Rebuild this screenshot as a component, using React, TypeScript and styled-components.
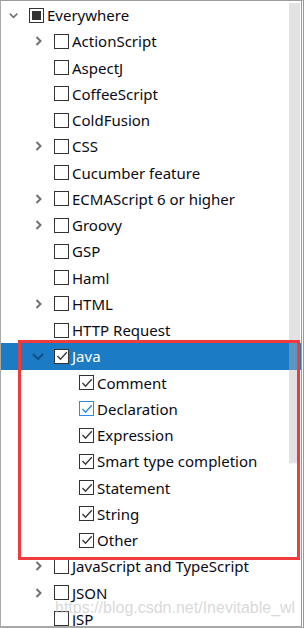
import React from "react";
import styled, { createGlobalStyle, css } from "styled-components";

type CheckState = "none" | "checked" | "partial";

interface Node {
  label: string;
  level: number;
  expander?: "down" | "right";
  check: CheckState;
  selected?: boolean;
  focused?: boolean;
}

const NODES: Node[] = [
  { label: "Everywhere", level: 0, expander: "down", check: "partial" },
  { label: "ActionScript", level: 1, expander: "right", check: "none" },
  { label: "AspectJ", level: 1, check: "none" },
  { label: "CoffeeScript", level: 1, check: "none" },
  { label: "ColdFusion", level: 1, check: "none" },
  { label: "CSS", level: 1, expander: "right", check: "none" },
  { label: "Cucumber feature", level: 1, check: "none" },
  { label: "ECMAScript 6 or higher", level: 1, expander: "right", check: "none" },
  { label: "Groovy", level: 1, expander: "right", check: "none" },
  { label: "GSP", level: 1, check: "none" },
  { label: "Haml", level: 1, check: "none" },
  { label: "HTML", level: 1, expander: "right", check: "none" },
  { label: "HTTP Request", level: 1, check: "none" },
  { label: "Java", level: 1, expander: "down", check: "checked", selected: true },
  { label: "Comment", level: 2, check: "checked" },
  { label: "Declaration", level: 2, check: "checked", focused: true },
  { label: "Expression", level: 2, check: "checked" },
  { label: "Smart type completion", level: 2, check: "checked" },
  { label: "Statement", level: 2, check: "checked" },
  { label: "String", level: 2, check: "checked" },
  { label: "Other", level: 2, check: "checked" },
  { label: "JavaScript and TypeScript", level: 1, expander: "right", check: "none" },
  { label: "JSON", level: 1, expander: "right", check: "none" },
  { label: "JSP", level: 1, check: "none" },
];

function Chevron({ dir, selected }: { dir: "down" | "right"; selected?: boolean }) {
  const color = selected ? "#0f4f86" : "#707070";
  if (dir === "down") {
    return (
      <svg width={selected ? 12 : 9} height="7" viewBox="0 0 12 7">
        <path d="M1 1 L6 6 L11 1" fill="none" stroke={color} strokeWidth="2" />
      </svg>
    );
  }
  return (
    <svg width="7" height="10" viewBox="0 0 7 10">
      <path d="M1.5 1 L5.5 5 L1.5 9" fill="none" stroke={color} strokeWidth="2" />
    </svg>
  );
}

function CheckBox({ state, focused }: { state: CheckState; focused?: boolean }) {
  return (
    <Box $focused={focused}>
      {state === "checked" && (
        <svg width="12" height="12" viewBox="0 0 12 12">
          <path
            d="M1.5 6 L4.5 9.2 L10.8 2.2"
            fill="none"
            stroke={focused ? "#2b8ae6" : "#3a3a3a"}
            strokeWidth="1.4"
          />
        </svg>
      )}
      {state === "partial" && <Partial />}
    </Box>
  );
}

export default function App() {
  return (
    <>
      <GlobalStyle />
      <Frame>
        <Tree>
          {NODES.map((n) => (
            <Row key={n.label} $level={n.level} $selected={n.selected}>
              <Expander>{n.expander && <Chevron dir={n.expander} selected={n.selected} />}</Expander>
              <CheckBox state={n.check} focused={n.focused} />
              <Label $selected={n.selected}>{n.label}</Label>
            </Row>
          ))}
        </Tree>
        <ScrollThumb />
        <Highlight />
        <Watermark>https://blog.csdn.net/Inevitable_wl</Watermark>
      </Frame>
    </>
  );
}

const GlobalStyle = createGlobalStyle`
  html, body {
    margin: 0;
    padding: 0;
    background: #ffffff;
  }
  body {
    font-family: "Noto Sans", "Noto Sans CJK SC", sans-serif;
  }
`;

const Frame = styled.div`
  position: relative;
  width: 304px;
  height: 628px;
  box-sizing: border-box;
  overflow: hidden;
  background: #ffffff;
  border-top: 1px solid #9c9c9c;
  border-left: 1px solid #a8a8a8;
  border-bottom: 2px solid #a8a8a8;
  border-right: 3px double #9a9a9a;
`;

const Tree = styled.div`
  display: flex;
  flex-direction: column;
  padding-top: 1px;
`;

const Row = styled.div<{ $level: number; $selected?: boolean }>`
  display: flex;
  align-items: center;
  flex: none;
  height: 26.26px;
  padding-left: ${(p) => p.$level * 25 + 2}px;
  ${(p) =>
    p.$selected &&
    css`
      background: #1b7bc4;
      margin-left: -1px;
      padding-left: ${p.$level * 25 + 3}px;
    `}
`;

const Expander = styled.span`
  width: 20px;
  height: 14px;
  display: flex;
  align-items: center;
  justify-content: center;
  flex: none;
`;

const Box = styled.span<{ $focused?: boolean }>`
  width: 15px;
  height: 15px;
  box-sizing: border-box;
  margin-left: 6px;
  flex: none;
  display: flex;
  align-items: center;
  justify-content: center;
  background: #ffffff;
  border: 1px solid ${(p) => (p.$focused ? "#2b8ae6" : "#333333")};
`;

const Partial = styled.span`
  width: 9px;
  height: 9px;
  background: #333333;
`;

const Label = styled.span<{ $selected?: boolean }>`
  margin-left: 3px;
  font-size: 15px;
  line-height: 20px;
  white-space: nowrap;
  color: ${(p) => (p.$selected ? "#ffffff" : "#0a0a14")};
`;

const ScrollThumb = styled.div`
  position: absolute;
  top: 2px;
  left: 288px;
  width: 11px;
  height: 460px;
  background: rgba(185, 185, 185, 0.42);
  border-bottom: 1px solid #f4f4f4;
`;

const Highlight = styled.div`
  position: absolute;
  left: 17px;
  top: 339px;
  width: 282px;
  height: 220px;
  box-sizing: border-box;
  border: 3px solid #ef3a3e;
  pointer-events: none;
`;

const Watermark = styled.div`
  position: absolute;
  left: 54px;
  top: 597px;
  font-family: "Liberation Sans", Arial, sans-serif;
  font-size: 16px;
  line-height: 20px;
  color: rgba(200, 200, 200, 0.7);
  white-space: nowrap;
  pointer-events: none;
`;
